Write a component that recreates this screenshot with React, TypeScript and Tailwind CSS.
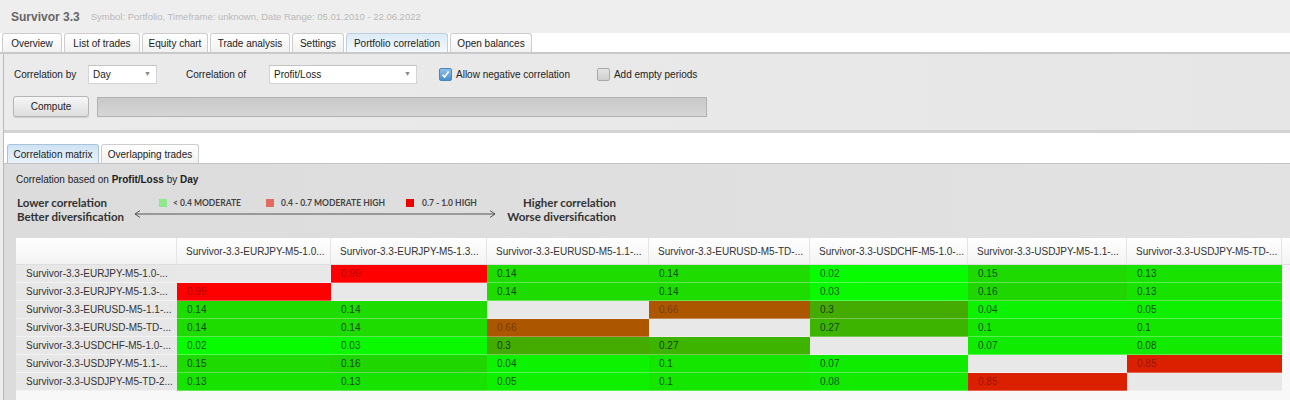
import React from "react";

const ui = { fontFamily: "'Liberation Sans', Arial, sans-serif" };
const legendFont = { fontFamily: "Lato, 'Open Sans', sans-serif" };

const mainTabs = [
  { label: "Overview", w: "w-[60px]" },
  { label: "List of trades", w: "w-[76px]" },
  { label: "Equity chart", w: "w-[66px]" },
  { label: "Trade analysis", w: "w-[80px]" },
  { label: "Settings", w: "w-[52px]" },
  { label: "Portfolio correlation", w: "w-[102px]", active: true },
  { label: "Open balances", w: "w-[82px]" },
];

const headers = [
  "Survivor-3.3-EURJPY-M5-1.0...",
  "Survivor-3.3-EURJPY-M5-1.3...",
  "Survivor-3.3-EURUSD-M5-1.1-...",
  "Survivor-3.3-EURUSD-M5-TD-...",
  "Survivor-3.3-USDCHF-M5-1.0-...",
  "Survivor-3.3-USDJPY-M5-1.1-...",
  "Survivor-3.3-USDJPY-M5-TD-...",
];

const rowLabels = [
  "Survivor-3.3-EURJPY-M5-1.0-...",
  "Survivor-3.3-EURJPY-M5-1.3-...",
  "Survivor-3.3-EURUSD-M5-1.1-...",
  "Survivor-3.3-EURUSD-M5-TD-...",
  "Survivor-3.3-USDCHF-M5-1.0-...",
  "Survivor-3.3-USDJPY-M5-1.1-...",
  "Survivor-3.3-USDJPY-M5-TD-2...",
];

const matrix = [
  ["", "0.99", "0.14", "0.14", "0.02", "0.15", "0.13"],
  ["0.99", "", "0.14", "0.14", "0.03", "0.16", "0.13"],
  ["0.14", "0.14", "", "0.66", "0.3", "0.04", "0.05"],
  ["0.14", "0.14", "0.66", "", "0.27", "0.1", "0.1"],
  ["0.02", "0.03", "0.3", "0.27", "", "0.07", "0.08"],
  ["0.15", "0.16", "0.04", "0.1", "0.07", "", "0.85"],
  ["0.13", "0.13", "0.05", "0.1", "0.08", "0.85", ""],
];

// cell colour per value, as the app renders it
const cellColor: Record<string, string> = {
  "": "bg-[#e8e8e8]",
  "0.02": "bg-[#08fc00]",
  "0.03": "bg-[#0af800]",
  "0.04": "bg-[#0cf200]",
  "0.05": "bg-[#0ef000]",
  "0.07": "bg-[#10ec00]",
  "0.08": "bg-[#12ea00]",
  "0.1": "bg-[#14e600]",
  "0.13": "bg-[#18e200]",
  "0.14": "bg-[#1edc00]",
  "0.15": "bg-[#1eda00]",
  "0.16": "bg-[#20d600]",
  "0.27": "bg-[#3cb400]",
  "0.3": "bg-[#44ac00]",
  "0.66": "bg-[#ad5600]",
  "0.85": "bg-[#db2000]",
  "0.99": "bg-[#ff0000]",
};

const colW = ["w-[154px]", "w-[156px]", "w-[162px]", "w-[161px]", "w-[158px]", "w-[159px]", "w-[155px]"];

function Select({ value, w }: { value: string; w: string }) {
  return (
    <div className={`${w} h-[19px] flex items-center justify-between pl-[4px] pr-[5px] bg-white border border-[#d4d4d4] border-t-[#c4c4c4] text-[10px] text-[#222]`}>
      <span>{value}</span>
      <span className="text-[7px] text-[#888]">▼</span>
    </div>
  );
}

export default function App() {
  return (
    <div style={ui} className="w-[1290px] h-[400px] overflow-hidden bg-[#efeeee] flex flex-col text-[#222]">
      {/* Title */}
      <div className="h-[33px] shrink-0 flex items-center pl-[11px] gap-[11px] pt-[1px]">
        <span className="text-[12px] font-bold text-[#666]">Survivor 3.3</span>
        <span className="text-[9.5px] text-[#b9b9b9]">Symbol: Portfolio, Timeframe: unknown, Date Range: 05.01.2010 - 22.06.2022</span>
      </div>

      {/* Main tabs */}
      <div className="h-[21px] shrink-0 bg-white flex items-end pl-[2px] gap-[2px] border-b-[2px] border-b-[#c9c9c9]">
        {mainTabs.map(t => (
          <div
            key={t.label}
            className={`${t.w} h-[19px] flex items-center justify-center text-[10px] border border-b-0 rounded-t-[3px] ${t.active ? "bg-gradient-to-b from-[#dcebf7] to-[#f4f9fd] border-[#c0cfdc]" : "bg-gradient-to-b from-white to-[#f1f1f1] border-[#cdcdcd]"}`}
          >
            {t.label}
          </div>
        ))}
      </div>

      {/* Content */}
      <div className="flex-1 min-h-0 ml-[3px] border-l border-[#b9b9b9] flex flex-col">
        {/* Settings panel */}
        <div className="h-[79px] shrink-0 bg-gradient-to-r from-[#ebebeb] to-[#e6e6e6] border-b-[3px] border-[#d3d3d3] pl-[8px] pt-[11px] flex flex-col gap-[12px]">
          <div className="flex items-center h-[19px] text-[10px]">
            <span className="w-[76px] pl-[2px]">Correlation by</span>
            <Select value="Day" w="w-[69px]" />
            <span className="ml-[29px] w-[83px]">Correlation of</span>
            <Select value="Profit/Loss" w="w-[148px]" />
            <div className="ml-[22px] flex items-center gap-[4px]">
              <div className="w-[13px] h-[13px] rounded-[2px] bg-gradient-to-b from-[#8fc0ea] to-[#4a8fd0] border border-[#4a84bd] flex items-center justify-center">
                <svg width="9" height="9" viewBox="0 0 9 9"><path d="M1.5 4.8 L3.6 7 L7.6 1.6" fill="none" stroke="white" strokeWidth="1.6" /></svg>
              </div>
              <span>Allow negative correlation</span>
            </div>
            <div className="ml-[27px] flex items-center gap-[4px]">
              <div className="w-[13px] h-[13px] rounded-[2px] bg-gradient-to-b from-[#e4e4e4] to-[#cfcfcf] border border-[#a9a9a9]" />
              <span>Add empty periods</span>
            </div>
          </div>
          <div className="flex items-center gap-[8px]">
            <div className="ml-[1px] w-[76px] h-[21px] rounded-[3px] border border-[#b5b5b5] bg-gradient-to-b from-[#f6f6f6] to-[#dedede] flex items-center justify-center text-[10px] shadow-[0_1px_0_#cfcfcf]">
              Compute
            </div>
            <div className="w-[610px] h-[20px] border border-[#b2b2b2] bg-gradient-to-b from-[#c9c9c9] to-[#d6d6d6]" />
          </div>
        </div>

        {/* Sub tabs */}
        <div className="h-[31px] shrink-0 bg-white flex items-end pl-[3px] gap-[2px] border-b border-[#c3c3c3]">
          <div className="w-[92px] h-[19px] flex items-center justify-center text-[10px] border border-b-0 border-[#a9c3dc] rounded-t-[3px] bg-gradient-to-b from-[#cfe3f3] to-[#e8f2fa]">Correlation matrix</div>
          <div className="w-[98px] h-[19px] flex items-center justify-center text-[10px] border border-b-0 border-[#cdcdcd] rounded-t-[3px] bg-gradient-to-b from-white to-[#f1f1f1]">Overlapping trades</div>
        </div>

        {/* Matrix panel */}
        <div className="flex-1 min-h-0 bg-gradient-to-r from-[#dcdcdc] to-[#e2e2e2] flex flex-col pl-[12px]">
          <div className="h-[29px] shrink-0 flex items-center text-[10px] pt-[1px]">
            Correlation based on&nbsp;<b>Profit/Loss</b>&nbsp;by&nbsp;<b>Day</b>
          </div>

          {/* Legend */}
          <div style={legendFont} className="h-[45px] shrink-0 flex items-start pt-[3px] text-[#333]">
            <div className="w-[118px] pl-[1px] text-[11.5px] font-bold leading-[14px]">
              <div>Lower correlation</div>
              <div>Better diversification</div>
            </div>
            <div className="w-[362px] flex flex-col">
              <div className="h-[14px] flex items-center text-[8.5px] font-bold text-[#444]">
                <span className="ml-[25px] w-[8px] h-[8px] bg-[#8ee88e]" />
                <span className="ml-[6px]">&lt; 0.4 MODERATE</span>
                <span className="ml-[25px] w-[8px] h-[8px] bg-[#e26c60]" />
                <span className="ml-[7px]">0.4 - 0.7 MODERATE HIGH</span>
                <span className="ml-[21px] w-[8px] h-[8px] bg-[#ee0000]" />
                <span className="ml-[8px]">0.7 - 1.0 HIGH</span>
              </div>
              <svg width="362" height="10" viewBox="0 0 362 10" className="mt-[-1px]">
                <path d="M1 5 H361" stroke="#444" strokeWidth="0.9" fill="none" />
                <path d="M6 1.5 L1 5 L6 8.5" stroke="#444" strokeWidth="0.9" fill="none" />
                <path d="M356 1.5 L361 5 L356 8.5" stroke="#444" strokeWidth="0.9" fill="none" />
              </svg>
            </div>
            <div className="w-[120px] text-right text-[11.5px] font-bold leading-[14px]">
              <div>Higher correlation</div>
              <div>Worse diversification</div>
            </div>
          </div>

          {/* Table */}
          <div className="flex-1 bg-[#f8f8f8] flex flex-col">
            <div className="h-[27px] shrink-0 flex bg-gradient-to-b from-white to-[#f3f3f3] border-b border-[#dedede]">
              <div className="w-[161px] h-full border-r border-[#e4e4e4]" />
              {headers.map((h, i) => (
                <div key={h} className={`${colW[i]} h-full flex items-center pl-[9px] text-[10px] text-[#333] border-r border-[#e4e4e4] whitespace-nowrap overflow-hidden`}>
                  {h}
                </div>
              ))}
            </div>
            {matrix.map((row, r) => (
              <div key={r} className="h-[18px] shrink-0 flex">
                <div className="w-[161px] h-full flex items-center pl-[10px] text-[10px] text-[#333] bg-[#e7e7e7] border-b border-[#f2f2f2] whitespace-nowrap overflow-hidden">
                  {rowLabels[r]}
                </div>
                {row.map((v, c) => (
                  <div
                    key={c}
                    className={`${colW[c]} ${cellColor[v]} h-full flex items-center pl-[10px] text-[10px] border-b border-white/30 ${v === "0.99" || v === "0.85" || v === "0.66" ? "text-black/35" : "text-black/70"}`}
                  >
                    {v}
                  </div>
                ))}
              </div>
            ))}
          </div>
        </div>
      </div>
    </div>
  );
}
